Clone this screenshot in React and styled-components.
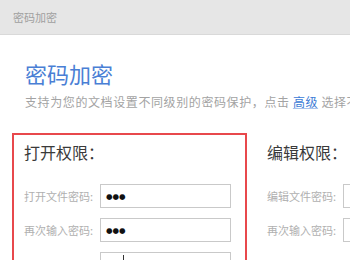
import React from "react";
import styled, { createGlobalStyle } from "styled-components";

const GlobalStyle = createGlobalStyle`
body {
    margin: 0;
    background: #fff;
    font-family: "Noto Sans CJK SC", "Liberation Sans", sans-serif;
}
`;

const Page = styled.div`
width: 350px;
height: 260px;
overflow: hidden;
background: #fff;
`;

const TitleBar = styled.div`
height: 35px;
box-sizing: border-box;
background: #e6e6e6;
border-bottom: 1px solid #d9d9d9;
padding-left: 13px;
display: flex;
align-items: center;
font-size: 11px;
color: #a0a0a0;
`;

const Body = styled.div`
padding: 23px 0 0 25px;
`;

const Heading = styled.h1`
margin: 0;
font-size: 22px;
line-height: 30px;
font-weight: 400;
color: #4a7fd5;
`;

const Intro = styled.p`
margin: 5px 0 0;
font-size: 12px;
line-height: 18px;
letter-spacing: 0.6px;
color: #a3a3a3;
white-space: nowrap;
`;

const Link = styled.span`
color: #3c7bd6;
text-decoration: underline;
text-decoration-color: #a9c4ec;
`;

const Panels = styled.div`
display: flex;
gap: 8px;
margin: 22px 0 0 -13px;
`;

const Panel = styled.div`
flex: none;
width: 235px;
height: 140px;
box-sizing: border-box;
border: 2px solid ${(p) => (p.$active ? "#e8484c" : "transparent")};
padding: 6px 10px 0;
`;

const PanelTitle = styled.div`
font-size: 16px;
line-height: 22px;
color: #3a3a3a;
margin-bottom: 21px;
`;

const Field = styled.div`
display: flex;
align-items: center;
margin-bottom: 10px;
`;

const Label = styled.span`
width: 76px;
flex: none;
font-size: 11px;
color: #b0b0b0;
`;

const Box = styled.div`
width: 131px;
height: 24px;
flex: none;
box-sizing: border-box;
border: 1px solid #c9c9c9;
padding-left: 5px;
display: flex;
align-items: center;
position: relative;
`;

const Dots = styled.span`
font-family: "DejaVu Sans", sans-serif;
font-size: 7.5px;
color: #111;
`;

const Caret = styled.span`
position: absolute;
left: 22px;
top: 2px;
width: 1px;
height: 12px;
background: #333;
`;

const PasswordField = ({ label, filled, caret }) => (
    <Field>
        <Label>{label}</Label>
        <Box>
            {filled && <Dots>●●●</Dots>}
            {caret && <Caret />}
        </Box>
    </Field>
);

export default function App() {
    return (
        <Page>
            <GlobalStyle />
            <TitleBar>密码加密</TitleBar>
            <Body>
                <Heading>密码加密</Heading>
                <Intro>
                    支持为您的文档设置不同级别的密码保护，点击 <Link>高级</Link> 选择不同的加密类型
                </Intro>
                <Panels>
                    <Panel $active>
                        <PanelTitle>打开权限：</PanelTitle>
                        <PasswordField label="打开文件密码:" filled />
                        <PasswordField label="再次输入密码:" filled />
                        <PasswordField label="" caret />
                    </Panel>
                    <Panel>
                        <PanelTitle>编辑权限：</PanelTitle>
                        <PasswordField label="编辑文件密码:" />
                        <PasswordField label="再次输入密码:" />
                    </Panel>
                </Panels>
            </Body>
        </Page>
    );
}
